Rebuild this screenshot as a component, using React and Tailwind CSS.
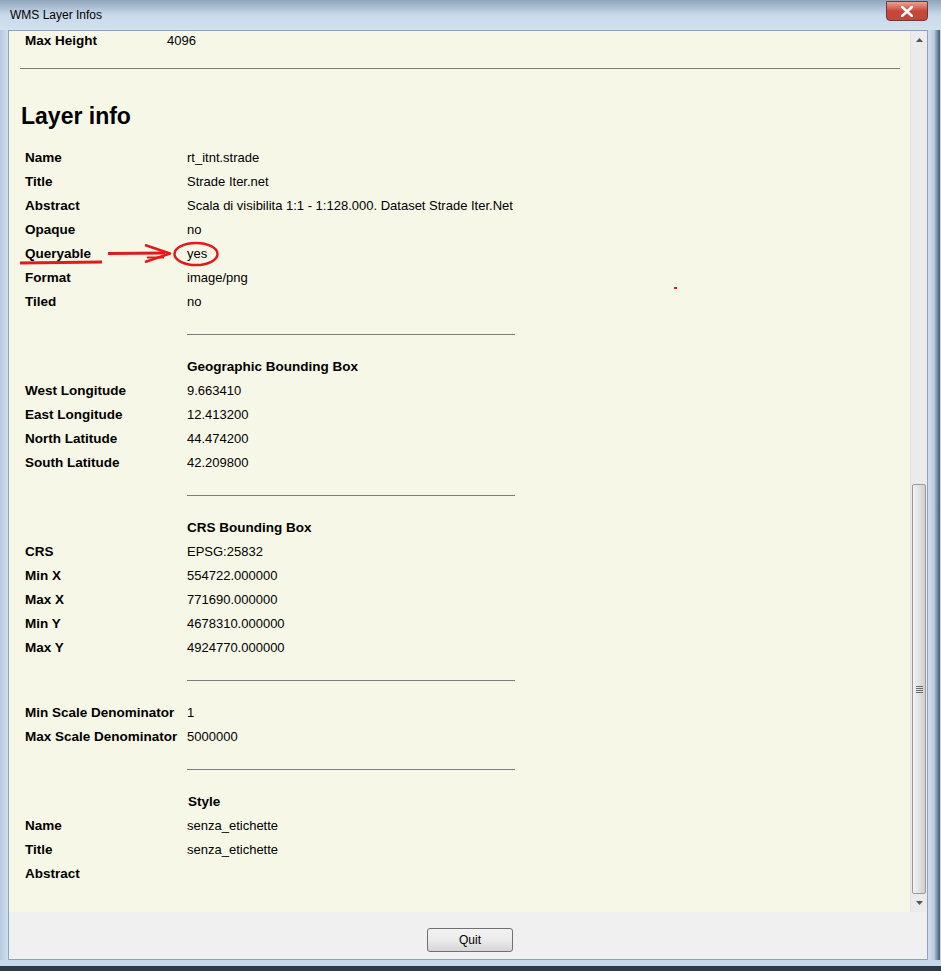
import React from "react";

const layerRows = [
  ["Name", "rt_itnt.strade"],
  ["Title", "Strade Iter.net"],
  ["Abstract", "Scala di visibilita 1:1 - 1:128.000. Dataset Strade Iter.Net"],
  ["Opaque", "no"],
  ["Queryable", "yes"],
  ["Format", "image/png"],
  ["Tiled", "no"],
];

const geoRows = [
  ["West Longitude", "9.663410"],
  ["East Longitude", "12.413200"],
  ["North Latitude", "44.474200"],
  ["South Latitude", "42.209800"],
];

const crsRows = [
  ["CRS", "EPSG:25832"],
  ["Min X", "554722.000000"],
  ["Max X", "771690.000000"],
  ["Min Y", "4678310.000000"],
  ["Max Y", "4924770.000000"],
];

const scaleRows = [
  ["Min Scale Denominator", "1"],
  ["Max Scale Denominator", "5000000"],
];

const styleRows = [
  ["Name", "senza_etichette"],
  ["Title", "senza_etichette"],
  ["Abstract", ""],
];

const Row = ({ label, value }) => (
  <div className="flex h-[24px] items-center">
    <div className="w-[162px] shrink-0 whitespace-nowrap text-[13.5px] font-bold text-black">
      {label}
    </div>
    <div className="whitespace-nowrap text-[13px] text-black">{value}</div>
  </div>
);

const Divider = () => (
  <div className="ml-[162px] my-[20px] w-[328px] border-t border-[#7d7d7d]" />
);

const SubHeading = ({ children, offset = "ml-[162px]" }) => (
  <div className={`${offset} flex h-[24px] items-center text-[13.5px] font-bold`}>
    {children}
  </div>
);

const Scrollbar = () => (
  <div className="flex w-[17px] flex-col bg-[#ebebeb] border-l border-[#e2e2e2]">
    <div className="flex h-[17px] items-center justify-center">
      <svg width="7" height="4" viewBox="0 0 7 4">
        <path d="M0 4 L3.5 0 L7 4 Z" fill="#555" />
      </svg>
    </div>
    <div className="h-[436px]" />
    <div className="flex h-[410px] mx-[1px] items-center justify-center rounded-[2px] border border-[#9a9a9a] bg-gradient-to-r from-[#f2f2f2] via-[#e2e2e2] to-[#cfcfcf]">
      <div className="flex flex-col gap-[1px]">
        <div className="h-[1px] w-[7px] bg-[#6a6a6a]" />
        <div className="h-[1px] w-[7px] bg-[#6a6a6a]" />
        <div className="h-[1px] w-[7px] bg-[#6a6a6a]" />
        <div className="h-[1px] w-[7px] bg-[#6a6a6a]" />
      </div>
    </div>
    <div className="flex flex-1 items-center justify-center">
      <svg width="7" height="4" viewBox="0 0 7 4">
        <path d="M0 0 L3.5 4 L7 0 Z" fill="#555" />
      </svg>
    </div>
  </div>
);

export default function App() {
  return (
    <div
      className="relative flex h-[971px] w-[941px] flex-col overflow-hidden bg-[#c3d6ea]"
      style={{ fontFamily: '"Liberation Sans", Arial, sans-serif' }}
    >
      {/* title bar */}
      <div className="relative flex h-[30px] items-center bg-gradient-to-b from-[#8fa5bd] via-[#c9d9ea] to-[#d3e1ef] pl-[10px]">
        <span className="text-[12px] text-black">WMS Layer Infos</span>
        <div className="absolute right-[13px] top-[1px] flex h-[20px] w-[42px] items-center justify-center rounded-b-[4px] border border-[#6b3a38] bg-gradient-to-b from-[#e8a292] via-[#c9453a] to-[#c2473a]">
          <svg width="12" height="11" viewBox="0 0 12 11">
            <path
              d="M1 1 L11 10 M11 1 L1 10"
              stroke="#ffffff"
              strokeWidth="2.6"
              strokeLinecap="square"
            />
          </svg>
        </div>
      </div>

      <div className="flex flex-1">
        <div className="w-[8px] bg-gradient-to-r from-[#b7cbe0] to-[#cfdeee]" />
        <div className="flex w-[920px] flex-col border border-[#8ea4bc]">
          <div className="flex h-[881px]">
            <div className="relative w-[902px] overflow-hidden bg-[#f7f7e8] pl-[16px]">
              <div className="flex h-[20px] items-center">
                <div className="w-[142px] text-[13.5px] font-bold">Max Height</div>
                <div className="text-[13px]">4096</div>
              </div>
              <div className="ml-[-5px] mt-[17px] w-[880px] border-t border-[#7d7d7d]" />
              <div className="ml-[-4px] mt-[33px] text-[23px] font-bold leading-[28px]">
                Layer info
              </div>
              <div className="mt-[16px]">
                {layerRows.map(([l, v]) => (
                  <Row key={l} label={l} value={v} />
                ))}
              </div>
              <Divider />
              <SubHeading>Geographic Bounding Box</SubHeading>
              {geoRows.map(([l, v]) => (
                <Row key={l} label={l} value={v} />
              ))}
              <Divider />
              <SubHeading>CRS Bounding Box</SubHeading>
              {crsRows.map(([l, v]) => (
                <Row key={l} label={l} value={v} />
              ))}
              <Divider />
              {scaleRows.map(([l, v]) => (
                <Row key={l} label={l} value={v} />
              ))}
              <Divider />
              <SubHeading offset="ml-[163px]">Style</SubHeading>
              {styleRows.map(([l, v]) => (
                <Row key={l} label={l} value={v} />
              ))}

              {/* red annotation */}
              <svg
                className="absolute left-0 top-0"
                width="902"
                height="300"
                viewBox="0 0 902 300"
              >
                <path d="M11 232 L93 231" stroke="#e01b1b" strokeWidth="3" fill="none" />
                <path d="M99 222.5 L156 222" stroke="#e01b1b" strokeWidth="3" fill="none" />
                <path d="M138 226.5 L155 226.5" stroke="#e01b1b" strokeWidth="2" fill="none" />
                <path
                  d="M136 214 L161 222.5 L136 231"
                  stroke="#e01b1b"
                  strokeWidth="2.5"
                  fill="none"
                  strokeLinejoin="round"
                />
                <ellipse
                  cx="187"
                  cy="223"
                  rx="21.5"
                  ry="11"
                  stroke="#e01b1b"
                  strokeWidth="2.5"
                  fill="none"
                />
                <rect x="665" y="256" width="3" height="2" fill="#e01b1b" />
              </svg>
            </div>
            <Scrollbar />
          </div>
          <div className="flex flex-1 items-start justify-center bg-[#f0f0f0] pt-[16px]">
            <button className="ml-[4px] h-[24px] w-[86px] rounded-[3px] border border-[#707070] bg-gradient-to-b from-[#f2f2f2] via-[#ebebeb] to-[#d6d6d6] text-[12px] text-black">
              Quit
            </button>
          </div>
        </div>
        <div className="w-[12px] bg-gradient-to-r from-[#cfdeee] via-[#b9cde2] to-[#44566a]" />
      </div>
      <div className="h-[6px] bg-[#c6d8ec]" />
      <div className="h-[5px] bg-[#2f3a44]" />
    </div>
  );
}
